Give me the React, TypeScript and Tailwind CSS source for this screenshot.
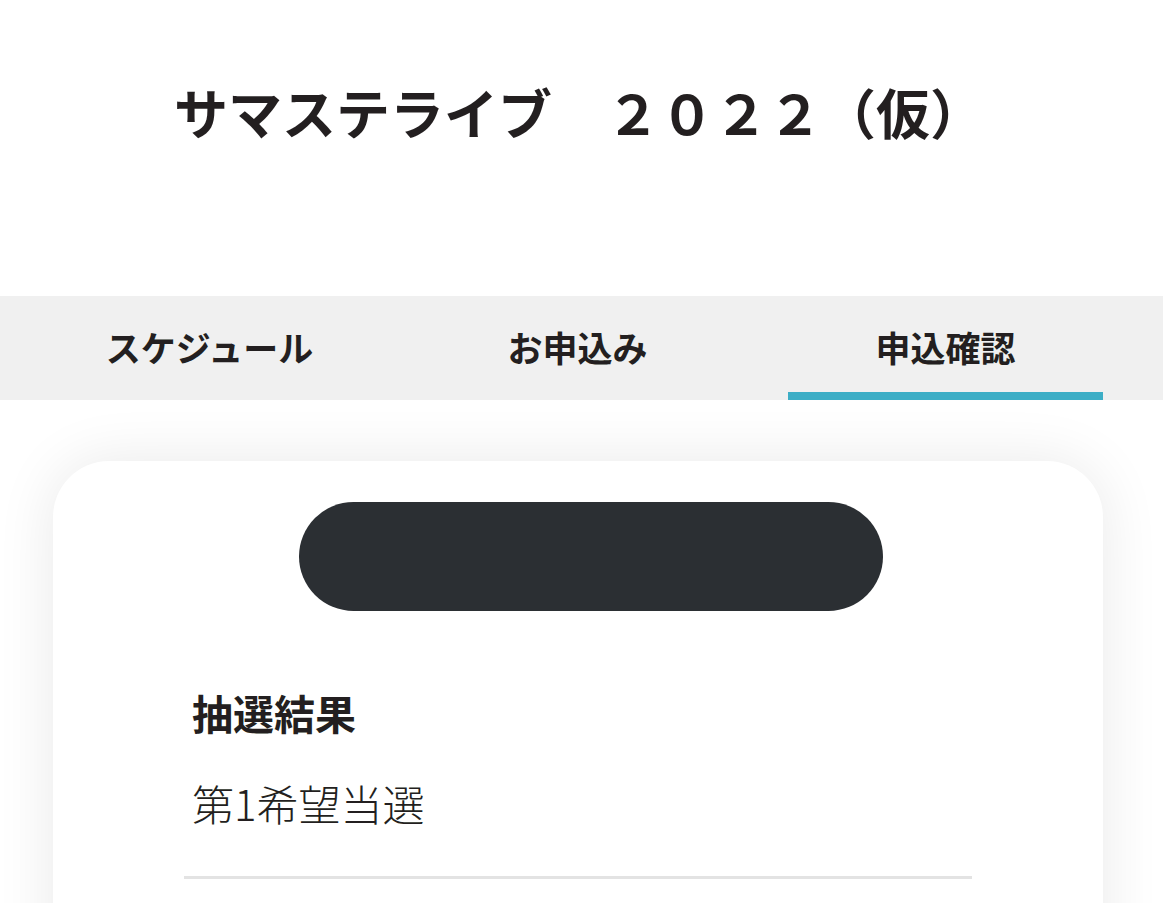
import React from "react";

const tabs = ["スケジュール", "お申込み", "申込確認"];

const App = () => {
  const active = 2;
  return (
    <div
      className="w-full h-[903px] overflow-hidden bg-white text-[#231f20]"
      style={{ fontFamily: '"Noto Sans CJK JP", "Noto Sans", sans-serif' }}
    >
      <header className="h-[296px] pl-[174px] pt-[85px]">
        <h1 className="text-[54px] font-bold leading-none whitespace-nowrap">
          サマステライブ　２０２２（仮）
        </h1>
      </header>

      <nav className="w-[1163px] h-[104px] bg-[#f0f0f0] flex gap-[53px] pl-[52px]">
        {tabs.map((t, i) => (
          <div
            key={t}
            className="relative w-[315px] flex items-center justify-center pb-[3px] text-[35px] font-bold leading-none"
          >
            {t}
            {i === active && (
              <span className="absolute left-0 right-0 bottom-0 h-[8px] bg-[#3daec6]"></span>
            )}
          </div>
        ))}
      </nav>

      <main className="pt-[61px] px-[53px]">
        <section className="w-[1050px] h-[600px] bg-white rounded-[56px] shadow-[0_0_60px_rgba(0,0,0,0.09)] pt-[41px] px-[131px]">
          <div className="ml-[115px] w-[584px] h-[109px] rounded-full bg-[#2b2f33]"></div>

          <div className="pl-[8px] pt-[81px]">
            <h2 className="text-[41px] font-bold leading-none">抽選結果</h2>
            <p className="mt-[49px] text-[42px] font-light leading-none">第1希望当選</p>
          </div>

          <div className="mt-[52px] h-[3px] bg-[#e3e3e3]"></div>
        </section>
      </main>
    </div>
  );
};

export default App;
